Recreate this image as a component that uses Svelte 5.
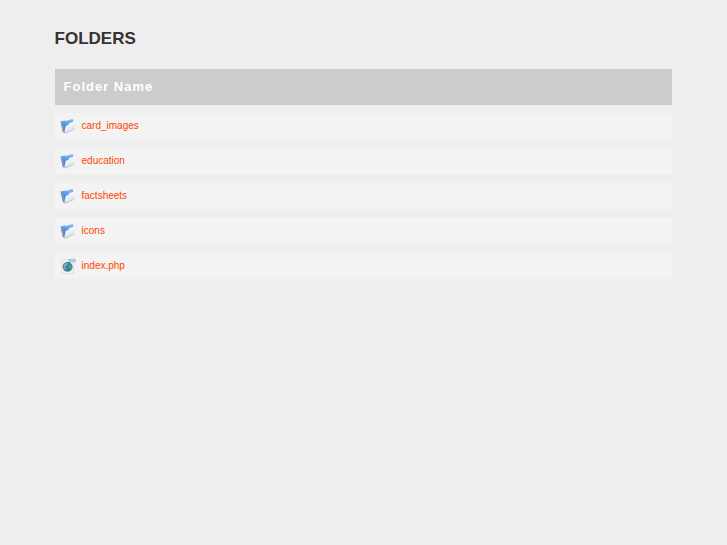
<script>
  const entries = [
    { name: 'card_images', type: 'folder' },
    { name: 'education', type: 'folder' },
    { name: 'factsheets', type: 'folder' },
    { name: 'icons', type: 'folder' },
    { name: 'index.php', type: 'file' }
  ];
</script>

<main>
  <h1>FOLDERS</h1>

  <table>
    <thead>
      <tr><th scope="col">Folder Name</th></tr>
    </thead>
    <tbody>
      {#each entries as entry}
        <tr>
          <td>
            <a href={'#' + entry.name}>
              {#if entry.type === 'folder'}
                <svg viewBox="0 0 16 16" aria-hidden="true">
                  <defs>
                    <linearGradient id="blue-{entry.name}" x1="0.3" y1="0" x2="0.1" y2="1">
                      <stop offset="0" stop-color="#82b6f2" />
                      <stop offset="0.5" stop-color="#4a8be0" />
                      <stop offset="1" stop-color="#5f7fa8" />
                    </linearGradient>
                    <linearGradient id="front-{entry.name}" x1="0" y1="0" x2="0.4" y2="1">
                      <stop offset="0" stop-color="#ffffff" />
                      <stop offset="0.5" stop-color="#f0f4fb" />
                      <stop offset="1" stop-color="#d6dee9" />
                    </linearGradient>
                  </defs>
                  <path d="M4 14.6 L14.4 10.9 L14.8 11.6 L4.8 15.4 Z" fill="#b4b8be" />
                  <path d="M0.6 3.4 L4.6 2.4 L5.8 3 L12.4 0.9 L13.2 2 L13.2 6 L4.4 14.8 L2.8 13.8 Z" fill="url(#blue-{entry.name})" />
                  <path d="M0.6 3.4 L2.8 13.8 L4.2 14.8 L3.6 8 Z" fill="#8198b6" />
                  <path d="M5.8 7.8 L8.4 6.9 L9.4 5 L14.9 3.4 L14.6 10.9 L4.2 14.7 Z" fill="url(#front-{entry.name})" />
                </svg>
              {:else}
                <svg viewBox="0 0 16 16" aria-hidden="true">
                  <path d="M2 1.5 H13.4 V15.4 H2 Z" fill="#f5f5f5" stroke="#d4d4d4" stroke-width="0.7" />
                  <path d="M8.4 0.9 H15.8 V4.3 H8.4 Z" fill="#a3c3de" />
                  <path d="M9.6 2.6 H14.8" stroke="#c2d8e9" stroke-width="0.8" />
                  <circle cx="7.6" cy="8.8" r="4.8" fill="#347fae" />
                  <path d="M3.7 6.8 Q5.4 4.1 7.8 4.7 L7.4 7 L5.2 8.4 L6.4 11.2 L5.4 12 Q2.8 9.8 3.7 6.8 Z" fill="#79b0ae" />
                  <path d="M8.5 7.1 L11.4 6.9 L11.9 9.3 L9.8 12.3 L8.2 10 Z" fill="#43a07b" />
                  <circle cx="7.6" cy="8.8" r="4.6" fill="none" stroke="#50799a" stroke-width="0.5" />
                </svg>
              {/if}
              {entry.name}
            </a>
          </td>
        </tr>
      {/each}
    </tbody>
  </table>
</main>

<style>
  :global(body) {
    margin: 0;
    background: #eee;
    font-family: "Liberation Sans", Arial, Helvetica, sans-serif;
  }
  main {
    width: 85%;
    margin: 0 auto;
    padding: 28px 0;
  }
  h1 {
    margin: 0 0 11px;
    color: #333;
    font-size: 17px;
    line-height: 21px;
  }
  table {
    width: 100%;
    border-collapse: separate;
    border-spacing: 0 9px;
  }
  th {
    height: 35px;
    padding: 0 9px;
    background: #ccc;
    box-shadow: 0 1px #ccc;
    color: #fff;
    font-size: 13px;
    line-height: 15px;
    letter-spacing: 1px;
    text-align: left;
  }
  td {
    height: 26px;
    padding: 0 5px;
    background: #f3f3f3;
  }
  a {
    display: flex;
    align-items: center;
    gap: 6px;
    color: #ff4500;
    font-size: 10px;
    line-height: 14px;
    text-decoration: none;
  }
  a:hover {
    text-decoration: underline;
  }
  svg {
    flex: none;
    width: 16px;
    height: 16px;
  }
</style>
